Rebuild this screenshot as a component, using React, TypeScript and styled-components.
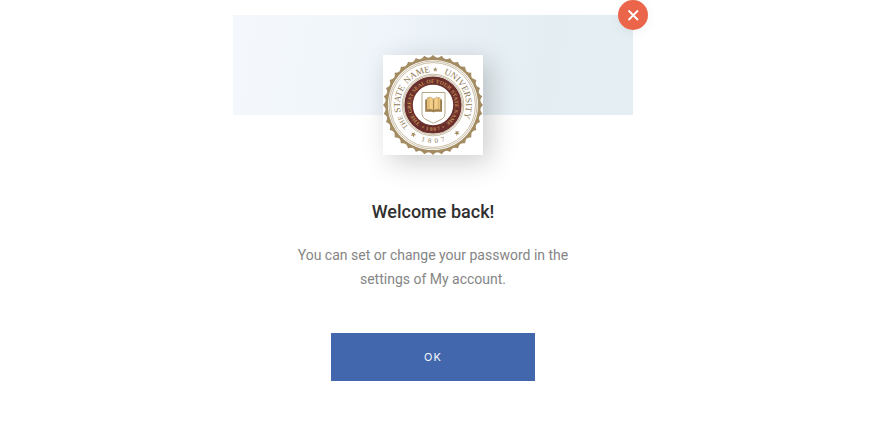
import React from "react";
import styled, { createGlobalStyle } from "styled-components";

const GlobalStyle = createGlobalStyle`
  *, *::before, *::after { box-sizing: border-box; }
  body {
    margin: 0;
    background: #ffffff;
    font-family: Roboto, "Liberation Sans", sans-serif;
  }
`;

const Page = styled.main`
  display: flex;
  justify-content: center;
  padding: 15px 14px 40px 0;
`;

const Dialog = styled.section`
  position: relative;
  display: flex;
  flex-direction: column;
  align-items: center;
  width: 100%;
  max-width: 400px;
  text-align: center;
`;

const Banner = styled.div`
  align-self: stretch;
  height: 100px;
  background: linear-gradient(100deg, #f4f8fd 0%, #f1f6fb 28%, #e8f0f5 60%, #e4eef2 76%, #e4eef3 100%);
`;

const CloseButton = styled.button`
  position: absolute;
  top: -15px;
  right: -15px;
  display: grid;
  place-items: center;
  width: 30px;
  height: 30px;
  padding: 0;
  border: 0;
  border-radius: 50%;
  background: #eb654b;
  box-shadow: 0 2px 10px rgba(60, 90, 110, 0.08);
  cursor: pointer;
`;

const LogoFrame = styled.div`
  width: 100px;
  height: 100px;
  margin-top: -60px;
  background: #ffffff;
  box-shadow: 7px 7px 26px rgba(0, 0, 0, 0.2);

  svg { display: block; }
`;

const Title = styled.h1`
  margin: 44px 0 0;
  color: #303030;
  font-size: 18px;
  font-weight: 500;
  line-height: 26px;
`;

const Message = styled.p`
  max-width: 300px;
  margin: 18px 0 0;
  color: #858585;
  font-size: 14px;
  line-height: 24px;
`;

const OkButton = styled.button`
  width: 204px;
  height: 48px;
  margin-top: 42px;
  border: 0;
  background: #4267ac;
  color: #f4f7fc;
  font-family: Inter, sans-serif;
  font-size: 11px;
  letter-spacing: 1px;
  cursor: pointer;
`;

const GOLD = "#a38b62";
const MAROON = "#6b2f2b";

const point = (radius: number, degrees: number) => {
  const a = (degrees * Math.PI) / 180;
  return `${(50 + radius * Math.sin(a)).toFixed(2)},${(50 - radius * Math.cos(a)).toFixed(2)}`;
};

const TEETH = 36;
const scallops = Array.from({ length: TEETH }, (_, i) => {
  const step = 360 / TEETH;
  return `${i === 0 ? `M${point(50, 0)}` : ""} Q${point(47.7, i * step + 2.5)} ${point(47.5, i * step + step / 2)} Q${point(47.7, i * step + step - 2.5)} ${point(50, (i + 1) * step)}`;
}).join(" ");

const clockwise = (r: number) => `M50,${50 + r} A${r},${r} 0 0 1 50,${50 - r} A${r},${r} 0 0 1 50,${50 + r}`;
const counter = (r: number) => `M50,${50 - r} A${r},${r} 0 0 0 50,${50 + r} A${r},${r} 0 0 0 50,${50 - r}`;

const starPoints = (x: number, y: number, r: number, turn: number) =>
  Array.from({ length: 10 }, (_, i) => {
    const a = ((i * 36 + turn) * Math.PI) / 180;
    const d = i % 2 ? r * 0.4 : r;
    return `${(x + d * Math.sin(a)).toFixed(2)},${(y - d * Math.cos(a)).toFixed(2)}`;
  }).join(" ");

const outerWords = [
  { text: "THE", size: 7, at: 240 },
  { text: "STATE", size: 9, at: 280 },
  { text: "NAME", size: 9, at: 332 },
  { text: "UNIVERSITY", size: 9, at: 66 },
];

function Seal() {
  return (
    <svg width="100" height="100" viewBox="0 0 100 100" role="img" aria-label="State Name University seal" fontFamily="'Liberation Serif', serif">
      <defs>
        <path id="ring-outer" d={clockwise(33)} />
        <path id="ring-outer-base" d={counter(38)} />
        <path id="ring-inner" d={clockwise(22)} />
        <path id="ring-inner-base" d={counter(26)} />
      </defs>
      <path d={`${scallops} Z`} fill={GOLD} />
      <circle cx="50" cy="50" r="45.1" fill="#fff" />
      <g fill="none" stroke="#b5a27f" strokeWidth="0.7">
        <circle cx="50" cy="50" r="44" />
        <circle cx="50" cy="50" r="42.4" />
        <circle cx="50" cy="50" r="30.8" />
        <circle cx="50" cy="50" r="29.5" />
      </g>
      <circle cx="50" cy="50" r="24.4" fill="none" stroke={MAROON} strokeWidth="8.4" />
      <g fill="#8f7a55" textAnchor="middle">
        {outerWords.map((word) => (
          <text key={word.text} fontSize={word.size}>
            <textPath href="#ring-outer" startOffset={`${(((word.at + 180) % 360) / 360) * 100}%`}>{word.text}</textPath>
          </text>
        ))}
        <text fontSize="7">
          <textPath href="#ring-outer-base" startOffset="50%">{"1\u00a0\u00a08\u00a0\u00a00\u00a0\u00a07"}</textPath>
        </text>
      </g>
      <g fill="#c08d56" textAnchor="middle" fontSize="5.5" fontWeight="700">
        <text>
          <textPath href="#ring-inner" startOffset="50%">THE GREAT SEAL OF YOUR STATE NAME</textPath>
        </text>
        <text>
          <textPath href="#ring-inner-base" startOffset="50%">{"•\u00a0\u00a01\u00a08\u00a00\u00a07\u00a0\u00a0•"}</textPath>
        </text>
      </g>
      <g fill={GOLD}>
        <polygon points={starPoints(52.3, 14.5, 2.7, 0)} />
        <polygon points={starPoints(30.3, 79.5, 3, 30)} />
        <polygon points={starPoints(74, 78, 3, -30)} />
      </g>
      <path d="M39,37.5 H62 V59 Q62,62 59,64 L50.5,68.3 L42,64 Q39,62 39,59 Z" fill="#fff" stroke="#b8a88a" strokeWidth="1" />
      <path d="M42.2,44.5 H59 V56.8 H52 L50.6,57.5 L49.2,56.8 H42.2 Z" fill="#9b7d4f" />
      <path d="M44,43 Q48,41 50.3,43.7 V55.3 Q47.5,53.5 44,54.8 Z M57.2,43 Q53.2,41 50.9,43.7 V55.3 Q53.7,53.5 57.2,54.8 Z" fill="#f4cf88" stroke="#94753f" strokeWidth="0.4" />
      <path d="M46,43 V54 M55.3,43 V54" stroke="#b28b4e" strokeWidth="0.5" />
    </svg>
  );
}

export default function App() {
  return (
    <>
      <GlobalStyle />
      <Page>
        <Dialog role="dialog" aria-labelledby="dialog-title" aria-describedby="dialog-message">
          <Banner />
          <CloseButton type="button" aria-label="Close">
            <svg width="12" height="12" viewBox="0 0 12 12" fill="none" stroke="#fff" strokeWidth="1.8" aria-hidden="true">
              <path d="M1.5 1.5 L11 11 M11 1.5 L1.5 11" />
            </svg>
          </CloseButton>
          <LogoFrame>
            <Seal />
          </LogoFrame>
          <Title id="dialog-title">Welcome back!</Title>
          <Message id="dialog-message">You can set or change your password in the settings of My account.</Message>
          <OkButton type="button">OK</OkButton>
        </Dialog>
      </Page>
    </>
  );
}
